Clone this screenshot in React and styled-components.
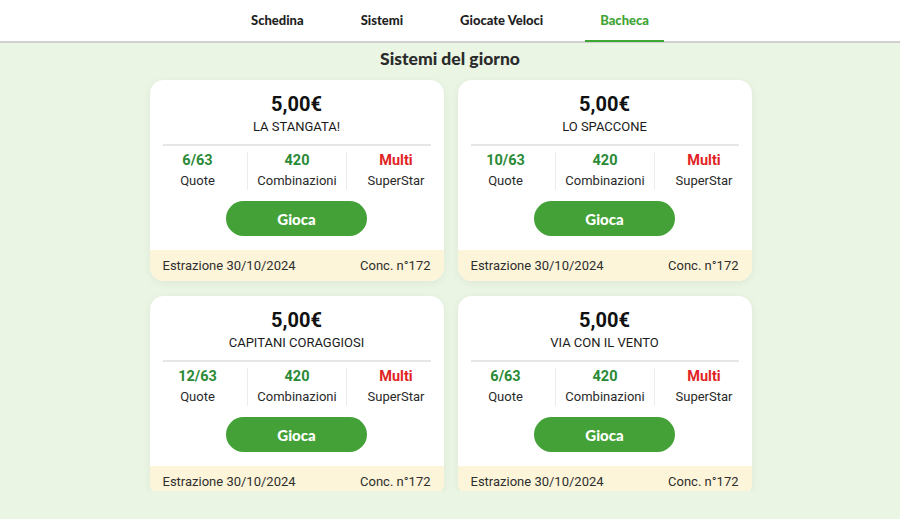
import React from "react";
import styled, { createGlobalStyle } from "styled-components";

const systems = [
    { name: "LA STANGATA!", quote: "6/63" },
    { name: "LO SPACCONE", quote: "10/63" },
    { name: "CAPITANI CORAGGIOSI", quote: "12/63" },
    { name: "VIA CON IL VENTO", quote: "6/63" },
];

const tabs = ["Schedina", "Sistemi", "Giocate Veloci", "Bacheca"];

function App() {
    return (
        <>
            <Global />
            <Page>
                <Nav>
                    <Tabs>
                        {tabs.map((t) => (
                            <Tab key={t} $active={t === "Bacheca"}>{t}</Tab>
                        ))}
                    </Tabs>
                </Nav>
                <Scroll>
                    <Title>Sistemi del giorno</Title>
                    <Grid>
                        {systems.map((s) => (
                            <Card key={s.name}>
                                <Body>
                                    <Price>5,00€</Price>
                                    <Name>{s.name}</Name>
                                    <Stats>
                                        <Stat>
                                            <Value>{s.quote}</Value>
                                            <Label>Quote</Label>
                                        </Stat>
                                        <Stat>
                                            <Value>420</Value>
                                            <Label>Combinazioni</Label>
                                        </Stat>
                                        <Stat>
                                            <Value $red>Multi</Value>
                                            <Label>SuperStar</Label>
                                        </Stat>
                                    </Stats>
                                    <Play>Gioca</Play>
                                </Body>
                                <Footer>
                                    <span>Estrazione 30/10/2024</span>
                                    <span>Conc. n°172</span>
                                </Footer>
                            </Card>
                        ))}
                    </Grid>
                </Scroll>
            </Page>
        </>
    );
}

export default App;

const Global = createGlobalStyle`
    body{
        margin:0;
        background:#eaf5e3;
        font-family:Roboto, "Liberation Sans", sans-serif;
        color:#1a1a1a;
    }
`
const Page = styled.div`
    height:519px;
    overflow:hidden;
    background:#eaf5e3;
`
const Nav = styled.div`
    height:41px;
    background:#fff;
    border-bottom:2px solid #cfcfcf;
    display:flex;
    justify-content:center;
`
const Tabs = styled.div`
    display:flex;
    gap:27px;
`
const Tab = styled.div`
    padding:0 15px;
    display:flex;
    align-items:center;
    font-family:Lato, sans-serif;
    font-weight:900;
    font-size:13px;
    color:${(p) => (p.$active ? "#3fa535" : "#1f1f1f")};
    border-bottom:2px solid ${(p) => (p.$active ? "#3fa535" : "transparent")};
    margin-bottom:-1px;
`
const Scroll = styled.div`
    height:448px;
    overflow:hidden;
`
const Title = styled.div`
    text-align:center;
    font-family:Lato, sans-serif;
    font-weight:900;
    font-size:17.5px;
    color:#2b2b2b;
    padding:5px 0 0;
    height:32px;
`
const Grid = styled.div`
    display:grid;
    grid-template-columns:294px 294px;
    gap:15px 14px;
    justify-content:center;
    padding-left:1px;
`
const Card = styled.div`
    background:#fff;
    border-radius:14px;
    overflow:hidden;
    box-shadow:0 2px 8px rgba(0,0,0,0.06);
`
const Body = styled.div`
    padding:12px 13px 14px;
    display:flex;
    flex-direction:column;
    align-items:center;
`
const Price = styled.div`
    font-size:20px;
    line-height:24px;
    font-weight:700;
    color:#111;
`
const Name = styled.div`
    font-size:13px;
    line-height:19px;
    padding-top:1px;
    color:#1a1a1a;
    align-self:stretch;
    text-align:center;
    padding-bottom:8px;
    border-bottom:2px solid #e6e6e6;
`
const Stats = styled.div`
    display:grid;
    grid-template-columns:repeat(3, 99px);
    justify-content:center;
    margin:6px -20px 0;
`
const Stat = styled.div`
    text-align:center;
    & + &{
        border-left:1px solid #ececec;
    }
`
const Value = styled.div`
    font-size:14.5px;
    line-height:18px;
    font-weight:700;
    color:${(p) => (p.$red ? "#e02424" : "#2a8a36")};
`
const Label = styled.div`
    font-size:13px;
    line-height:19px;
    padding-top:1px;
    color:#2a2a2a;
`
const Play = styled.button`
    margin-top:11px;
    width:141px;
    height:35px;
    border:none;
    border-radius:18px;
    background:#43a137;
    color:#fff;
    font-family:Lato, sans-serif;
    font-weight:900;
    font-size:15px;
`
const Footer = styled.div`
    height:31px;
    background:#fdf5d9;
    padding:0 13px;
    display:flex;
    align-items:center;
    justify-content:space-between;
    font-size:13px;
    color:#2e2e2e;
`
